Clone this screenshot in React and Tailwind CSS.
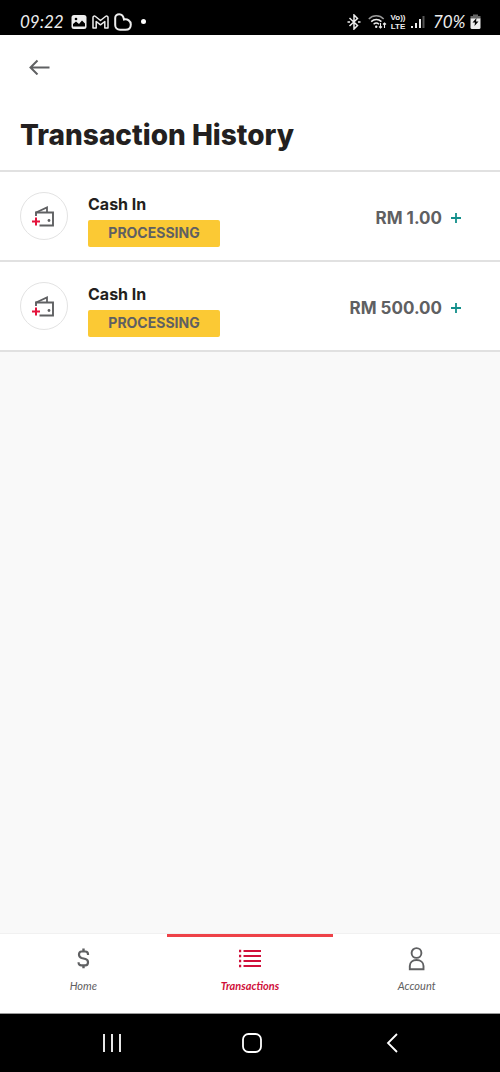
import React, { useState } from 'react';

const transactions = [
  { id: 1, title: 'Cash In', status: 'PROCESSING', amount: 'RM 1.00' },
  { id: 2, title: 'Cash In', status: 'PROCESSING', amount: 'RM 500.00' },
];

const WalletIcon = () => (
  <svg width="24" height="22" viewBox="0 0 24 22" fill="none" aria-hidden="true">
    <path d="M4 11V7.500H21V20.500H7.500" stroke="#5f6062" strokeWidth="1.900" />
    <path d="M4 7.500L15 2.500V7" stroke="#5f6062" strokeWidth="1.800" />
    <circle cx="17" cy="15.500" r="1.400" fill="#5f6062" />
    <path d="M0 16.500H8M4 12.500V20.500" stroke="#e4123b" strokeWidth="2" />
  </svg>
);

const HomeIcon = () => (
  <svg width="24" height="24" viewBox="0 0 24 24" fill="none" stroke="currentColor" strokeWidth="2.200" aria-hidden="true">
    <path d="M17 8V7.300C17 5.700 16 4.500 14.300 4.500H10.500C8.800 4.500 8 5.700 8 7.500C8 9.500 9 10.500 10.500 11L14.500 12C16.200 12.500 17 13.500 17 15.200C17 17.200 16 18.300 14.300 18.300H10.300C8.700 18.300 7.600 17.500 7.600 15.800V15.300" />
    <path d="M12.500 1.500V4.500M12.500 18.300V21.300" strokeWidth="2.400" />
  </svg>
);

const ListIcon = () => (
  <svg width="24" height="24" viewBox="0 0 24 24" fill="none" stroke="#d0103a" strokeWidth="2" aria-hidden="true">
    <path d="M1 4H3.200M1 9H3.200M1 14H3.200M1 19H3.200" strokeWidth="2.300" />
    <path d="M5.500 4H23M5.500 9H23M5.500 14H23M5.500 19H23" />
  </svg>
);

const AccountIcon = () => (
  <svg width="24" height="24" viewBox="0 0 24 24" fill="none" stroke="currentColor" strokeWidth="1.900" aria-hidden="true">
    <circle cx="11.500" cy="6" r="4.900" />
    <path d="M4.800 22.300V19C4.800 15.300 7.500 13 11.500 13S18.500 15.300 18.500 19V22.300Z" />
  </svg>
);

const tabs = [
  { id: 'home', label: 'Home', Icon: HomeIcon },
  { id: 'transactions', label: 'Transactions', Icon: ListIcon },
  { id: 'account', label: 'Account', Icon: AccountIcon },
];

const StatusBar = () => (
  <div className="h-[35px] shrink-0 bg-black text-[#eeeeee] flex items-center justify-between pt-2 pl-5 pr-[19px] font-['Lato',sans-serif] italic text-[17px] leading-5">
    <div className="flex items-center gap-[5px]">
      <span className="w-[46px]">09:22</span>
      <svg width="16" height="16" viewBox="0 0 16 16" aria-hidden="true">
        <rect x="0.500" y="1" width="15" height="14" rx="2.500" fill="#eee" />
        <circle cx="5" cy="5" r="1.300" fill="#000" />
        <path d="M2 12.500V10L5 7.500L8 10L11 6.500L14 9.500V12.500Z" fill="#000" />
      </svg>
      <svg width="17" height="14" viewBox="0 0 17 14" fill="none" stroke="#eee" strokeWidth="1.500" strokeLinejoin="round" aria-hidden="true">
        <path d="M1 13V2.500C1 1 2.500 0.700 3.500 1.500L8.500 5.500L13.500 1.500C14.500 0.700 16 1 16 2.500V13H12.800V6.500L8.500 9.800L4.200 6.500V13Z" />
      </svg>
      <svg width="18" height="18" viewBox="0 0 18 18" fill="none" stroke="#eee" strokeWidth="2" aria-hidden="true">
        <path d="M1.200 5C1.200 2.500 3 1.200 5.200 1.200C8 1.200 9.500 3.500 10 6.500C13.500 5.800 16.800 8 16.800 11.500C16.800 15 14.500 16.800 11.500 16.800H6C3 16.800 1.200 14.500 1.200 12Z" />
      </svg>
      <span className="ml-1 size-[5px] rounded-full bg-white" />
    </div>

    <div className="flex items-center">
      <svg width="14" height="16" viewBox="0 0 14 16" fill="none" stroke="#eee" strokeWidth="1.500" aria-hidden="true">
        <path d="M2.500 4L10.500 11.500L7 15V1L10.500 4.500L2.500 12M0.500 8H3M11 8H13.500" />
      </svg>
      <svg className="ml-[7px]" width="19" height="16" viewBox="0 0 19 16" fill="none" stroke="#eee" strokeWidth="1.500" aria-hidden="true">
        <path d="M0.800 5C5 0.800 11.500 0.800 15.700 5" stroke="#999" />
        <path d="M3.200 7.600C6.200 4.800 10.500 4.800 13.400 7.600M5.600 10.200C7.200 8.800 9.400 8.800 11 10.200" />
        <circle cx="8.200" cy="12.800" r="1.200" fill="#eee" stroke="none" />
        <path d="M12.500 9V14M11 12.500L12.500 14L14 12.500M16.500 14V9M15 10.500L16.500 9L18 10.500" strokeWidth="1.100" />
      </svg>
      <div className="ml-[3px] w-4 flex flex-col items-center font-['Liberation_Sans',sans-serif] not-italic font-bold text-[8px] leading-[9px]">
        <span>Vo))</span>
        <span>LTE</span>
      </div>
      <svg className="ml-[5px]" width="14" height="14" viewBox="0 0 14 14" fill="#eee" aria-hidden="true">
        <path d="M0 11H2V13H0ZM4 8H6V13H4ZM8 4H10V13H8Z" />
        <path d="M11.500 1H13.500V13H11.500Z" fill="#555" />
      </svg>
      <span className="ml-2 w-[35px]">70%</span>
      <svg className="ml-[2px]" width="11" height="16" viewBox="0 0 11 16" aria-hidden="true">
        <path d="M3 0.500H8V2H10.500V5H0.500V2H3Z" fill="#666" />
        <path d="M0.500 4.500H10.500V13.500Q10.500 15 9 15H2Q0.500 15 0.500 13.500Z" fill="#eee" />
        <path d="M6.500 4L2.500 8.500H5L4.500 12L8.500 7.500H6Z" fill="#000" />
      </svg>
    </div>
  </div>
);

const TransactionRow = ({ title, status, amount }) => (
  <li className="h-[90px] flex items-center gap-5 pl-5 pr-[30px] bg-white border-b-2 border-[#e1e1e1]">
    <div className="size-12 shrink-0 rounded-full border border-[#e3e3e3] flex items-center justify-center">
      <WalletIcon />
    </div>
    <div className="flex-1 pt-[6px]">
      <h2 className="text-base leading-6 font-bold text-[#231f20]">{title}</h2>
      <span className="mt-1 w-[132px] h-[27px] rounded-xs bg-[#fbc934] text-[#5f6062] text-sm font-bold flex items-center justify-center">
        {status}
      </span>
    </div>
    <div className="flex items-center pt-[3px]">
      <span className="text-[17px] leading-6 font-bold text-[#5f6062]">{amount}</span>
      <span className="size-7 flex items-center justify-center">
        <svg width="10" height="10" viewBox="0 0 10 10" stroke="#128f8b" strokeWidth="1.800" aria-hidden="true">
          <path d="M0 5H10M5 0V10" />
        </svg>
      </span>
    </div>
  </li>
);

const App = () => {
  const [activeTab, setActiveTab] = useState('transactions');

  return (
    <div className="min-h-screen flex flex-col bg-[#f9f9f9] font-['Inter',sans-serif]">
      <StatusBar />

      {/* Header */}
      <header className="bg-white border-b-2 border-[#e1e1e1] px-5 pt-4 pb-[15px]">
        <button type="button" aria-label="Back" className="w-10 h-8 flex items-center justify-center">
          <svg width="22" height="16" viewBox="0 0 22 16" fill="none" stroke="#5f6062" strokeWidth="2" aria-hidden="true">
            <path d="M20.500 8.500H1.500M8.500 1.500L1.500 8.500L8.500 15.500" />
          </svg>
        </button>
        <h1 className="mt-8 text-[28px] leading-10 font-extrabold text-[#231f20]">Transaction History</h1>
      </header>

      {/* Transactions */}
      <main className="flex-1">
        <ul>
          {transactions.map((item) => (
            <TransactionRow key={item.id} {...item} />
          ))}
        </ul>
      </main>

      {/* Tab bar */}
      <nav className="h-20 grid grid-cols-3 bg-white border-t border-[#f1f1f1]">
        {tabs.map(({ id, label, Icon }) => (
          <button
            key={id}
            type="button"
            onClick={() => setActiveTab(id)}
            className={`flex flex-col items-center pt-[10px] gap-[7px] border-t-[3px] font-['Lato',sans-serif] italic text-[11px] leading-4 ${
              activeTab === id ? 'border-[#ee4248] text-[#d0103a] font-bold' : 'border-transparent text-[#5f6062]'
            }`}
          >
            <Icon />
            <span>{label}</span>
          </button>
        ))}
      </nav>

      {/* System buttons */}
      <div className="h-[59px] shrink-0 bg-black border-t border-[#9a9a9a] flex items-center justify-between pl-[102px] pr-[98px]">
        <button type="button" aria-label="Recent apps">
          <svg width="20" height="20" viewBox="0 0 20 20" stroke="#fff" strokeWidth="1.800" aria-hidden="true">
            <path d="M2 1V19M10 1V19M18 1V19" />
          </svg>
        </button>
        <button type="button" aria-label="Home screen">
          <svg width="20" height="20" viewBox="0 0 20 20" fill="none" stroke="#fff" strokeWidth="1.800" aria-hidden="true">
            <rect x="1" y="1" width="18" height="18" rx="5.500" />
          </svg>
        </button>
        <button type="button" aria-label="Go back">
          <svg width="20" height="20" viewBox="0 0 20 20" fill="none" stroke="#fff" strokeWidth="1.800" aria-hidden="true">
            <path d="M15 1L6 10L15 19" />
          </svg>
        </button>
      </div>
    </div>
  );
};

export default App;
